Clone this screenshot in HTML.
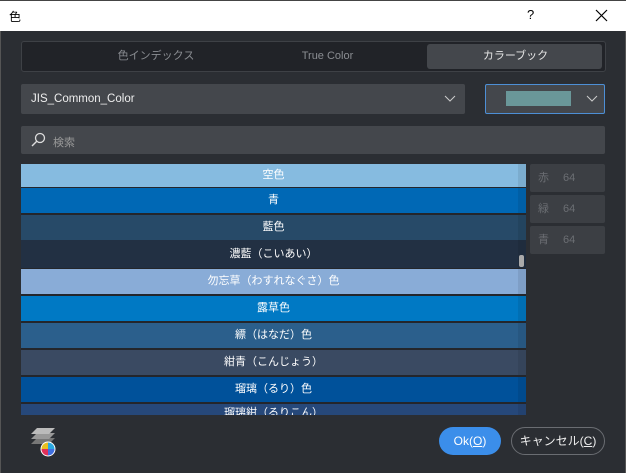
<!DOCTYPE html><html><head><style>
body{margin:0;width:626px;height:473px;background:#2b2e33;font-family:"Liberation Sans","Noto Sans CJK JP",sans-serif;position:relative;overflow:hidden;border:0}
.a{position:absolute}
.row{position:absolute;left:21px;width:505px;height:25px;line-height:25px;text-align:center;color:#fff;font-size:11px}
.sb{position:absolute;right:0;top:0;width:8px;height:100%;background:rgba(0,0,0,.08)}
.rgb{position:absolute;left:530px;width:75px;height:28px;background:#3c3f44;color:#6b6e73;font-size:11px;line-height:28px;border-radius:2px}
.tab{position:absolute;top:44px;height:25px;line-height:25px;text-align:center;font-size:11px;color:#8a8d92}
</style></head><body>
<div class="a" style="left:0;top:0;width:626px;height:31px;background:#fff;border-top:1px solid #444;box-sizing:border-box"></div>
<div class="a" style="left:9px;top:8px;font-size:12px;color:#000">色</div>
<div class="a" style="left:527px;top:7px;font-size:13px;color:#000">?</div>
<svg class="a" style="left:595px;top:9px" width="13" height="13"><path d="M1 1L12 12M12 1L1 12" stroke="#000" stroke-width="1.2"/></svg>
<div class="a" style="left:0;top:31px;width:1px;height:442px;background:#555"></div>
<div class="a" style="left:625px;top:31px;width:1px;height:442px;background:#555"></div>
<div class="a" style="left:21px;top:41px;width:583px;height:29px;background:#212328;border:1px solid #3e4146;border-radius:3px"></div>
<div class="a" style="left:427px;top:44px;width:175px;height:25px;background:#44474c;border-radius:3px"></div>
<div class="tab" style="left:21px;width:270px">色インデックス</div>
<div class="tab" style="left:210px;width:235px">True Color</div>
<div class="tab" style="left:428px;width:175px;color:#e6e6e6">カラーブック</div>
<div class="a" style="left:21px;top:84px;width:444px;height:30px;background:#44474c;border-radius:2px"></div>
<div class="a" style="left:31px;top:93px;font-size:11.5px;color:#eee">JIS_Common_Color</div>
<svg class="a" style="left:444px;top:95px" width="12" height="8"><path d="M1 1L6 6L11 1" stroke="#ccc" fill="none"/></svg>
<div class="a" style="left:485px;top:84px;width:118px;height:28px;background:#44474c;border:1px solid #4d8fd6;border-radius:2px"></div>
<div class="a" style="left:506px;top:91px;width:65px;height:15px;background:#6a9799"></div>
<svg class="a" style="left:586px;top:95px" width="12" height="8"><path d="M1 1L6 6L11 1" stroke="#ccc" fill="none"/></svg>
<div class="a" style="left:21px;top:126px;width:584px;height:28px;background:#44474c;border-radius:2px"></div>
<svg class="a" style="left:30px;top:132px" width="16" height="16"><circle cx="10" cy="6" r="4.5" stroke="#ddd" fill="none" stroke-width="1.3"/><path d="M7 9L2 14" stroke="#ddd" stroke-width="1.4"/></svg>
<div class="a" style="left:53px;top:134px;font-size:11px;color:#999">検索</div>
<div class="a" style="left:21px;top:164px;width:505px;height:251px;background:#24262b;overflow:hidden"></div>
<div class="row" style="top:164px;height:23px;line-height:23px;background:#86bbe0">空色<div class="sb"></div></div>
<div class="row" style="top:188px;background:#0068b5">青<div class="sb"></div></div>
<div class="row" style="top:215px;background:#274a68">藍色<div class="sb"></div></div>
<div class="row" style="top:240px;height:28px;line-height:28px;background:#223043">濃藍（こいあい）<div class="sb"><div style="position:absolute;left:1px;top:15px;width:5px;height:12px;background:#aaa;border-radius:2px"></div></div></div>
<div class="row" style="top:269px;background:#89acd7">勿忘草（わすれなぐさ）色<div class="sb"></div></div>
<div class="row" style="top:296px;background:#0079c4">露草色<div class="sb"></div></div>
<div class="row" style="top:323px;background:#2b5f8c">縹（はなだ）色<div class="sb"></div></div>
<div class="row" style="top:350px;background:#3a4a62">紺青（こんじょう）<div class="sb"></div></div>
<div class="row" style="top:377px;background:#00519a">瑠璃（るり）色<div class="sb"></div></div>
<div class="row" style="top:404px;height:11px;line-height:18px;overflow:hidden;background:#26487a">瑠璃紺（るりこん）<div class="sb"></div></div>
<div class="rgb" style="top:164px"><span style="margin-left:8px">赤</span><span style="margin-left:14px">64</span></div>
<div class="rgb" style="top:195px"><span style="margin-left:8px">緑</span><span style="margin-left:14px">64</span></div>
<div class="rgb" style="top:226px"><span style="margin-left:8px">青</span><span style="margin-left:14px">64</span></div>
<svg class="a" style="left:29px;top:424px" width="30" height="34"><path d="M2 20L8 14H26L20 20Z" fill="#777"/><path d="M2 15L8 9H26L20 15Z" fill="#999"/><path d="M2 10L8 4H26L20 10Z" fill="#bbb"/><circle cx="19" cy="25" r="7.5" fill="#fff"/><path d="M19 25L19 18.5A6.5 6.5 0 0 1 25.5 25Z" fill="#2aa8e0"/><path d="M19 25L25.5 25A6.5 6.5 0 0 1 19 31.5Z" fill="#3f6fe0"/><path d="M19 25L19 31.5A6.5 6.5 0 0 1 12.5 25Z" fill="#e0305a"/><path d="M19 25L12.5 25A6.5 6.5 0 0 1 19 18.5Z" fill="#e8c020"/></svg>
<div class="a" style="left:439px;top:427px;width:62px;height:28px;background:#3b8eea;border-radius:14px;color:#fff;font-size:12px;line-height:28px;text-align:center">Ok(<u>O</u>)</div>
<div class="a" style="left:511px;top:427px;width:92px;height:26px;border:1px solid #6a6d72;border-radius:14px;color:#eee;font-size:12px;line-height:26px;text-align:center">キャンセル(<u>C</u>)</div>
</body></html>
